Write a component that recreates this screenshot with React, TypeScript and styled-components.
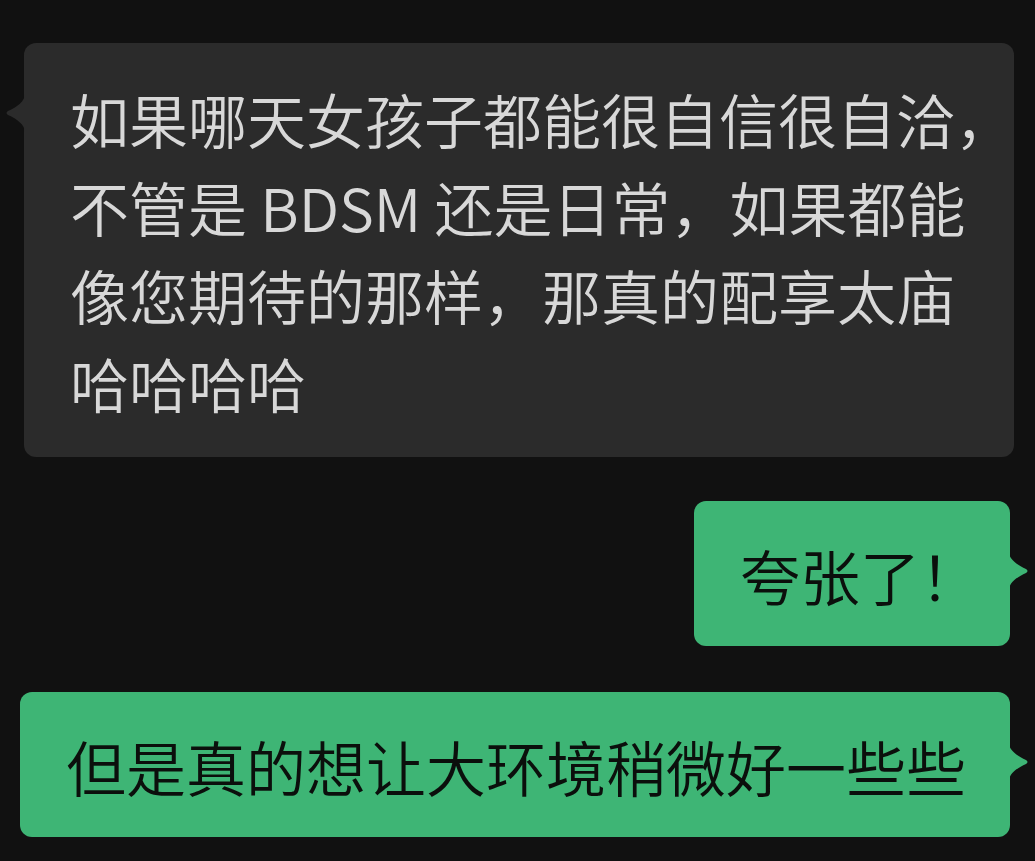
import styled, { createGlobalStyle } from "styled-components"

const Global = createGlobalStyle`
  html, body {
    margin: 0;
    background: #111111;
  }
  body {
    font-family: "Noto Sans CJK SC", "Noto Sans", sans-serif;
  }
`

const Chat = styled.main`
  width: 1035px;
  min-height: 861px;
  box-sizing: border-box;
  padding: 43px 0 0;
  display: flex;
  flex-direction: column;
  background: #111111;
`

const Row = styled.div<{ $mine?: boolean; $gap: number }>`
  display: flex;
  justify-content: ${p => (p.$mine ? "flex-end" : "flex-start")};
  padding: ${p => (p.$mine ? "0 25px 0 0" : "0 0 0 24px")};
  margin-bottom: ${p => p.$gap}px;
`

const Bubble = styled.div<{ $mine?: boolean; $pad: string }>`
  position: relative;
  box-sizing: border-box;
  padding: ${p => p.$pad};
  border-radius: 12px;
  background: ${p => (p.$mine ? "#3eb575" : "#2b2b2b")};
  color: ${p => (p.$mine ? "#0b0f0c" : "#d8d8d8")};
  font-size: ${p => (p.$mine ? 60 : 59)}px;
  font-weight: 350;
  line-height: 88px;
  white-space: nowrap;
`

const Tail = styled.svg<{ $mine?: boolean }>`
  position: absolute;
  top: 51px;
  width: 21px;
  height: 38px;
  ${p => (p.$mine ? "right: -19px; transform: scaleX(-1);" : "left: -19px;")}
  fill: ${p => (p.$mine ? "#3eb575" : "#2b2b2b")};
`

function BubbleTail({ mine }: { mine?: boolean }) {
  return (
    <Tail $mine={mine} viewBox="0 0 21 38">
      <path d="M21 0 L20 0 C20 7 12 13 3 17 Q0 19 3 21 C12 25 20 31 20 38 L21 38 Z" />
    </Tail>
  )
}

export default function App() {
  return (
    <>
      <Global />
      <Chat>
        <Row $gap={44}>
          <Bubble $pad="32px 0 30px 46px" style={{ width: 990 }}>
            <BubbleTail />
            如果哪天女孩子都能很自信很自洽，<br />
            不管是 BDSM 还是日常，如果都能<br />
            像您期待的那样，那真的配享太庙<br />
            哈哈哈哈
          </Bubble>
        </Row>
        <Row $mine $gap={46}>
          <Bubble $mine $pad="30px 30px 27px 46px">
            <BubbleTail mine />
            夸张了！
          </Bubble>
        </Row>
        <Row $mine $gap={0}>
          <Bubble $mine $pad="30px 44px 27px 46px">
            <BubbleTail mine />
            但是真的想让大环境稍微好一些些
          </Bubble>
        </Row>
      </Chat>
    </>
  )
}
